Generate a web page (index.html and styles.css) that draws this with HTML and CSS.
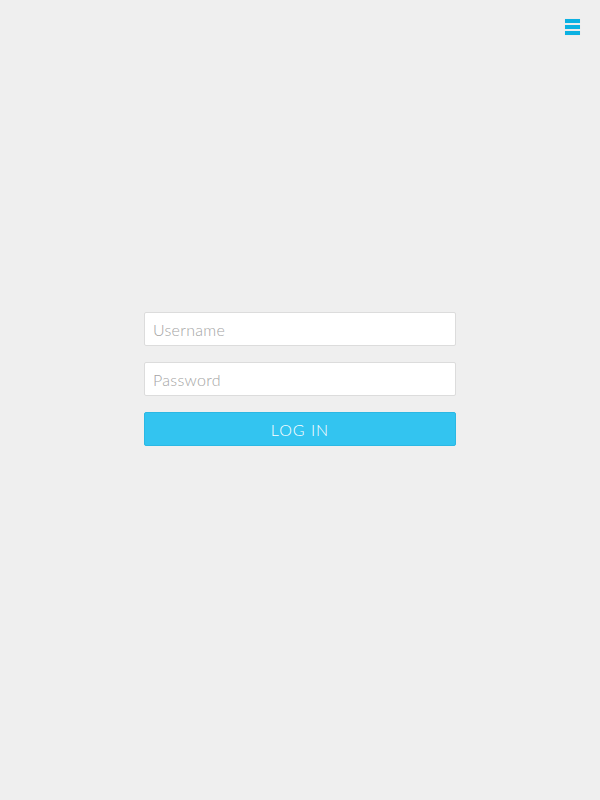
FILE: index.html
```html
<!DOCTYPE html>
<html lang="en">
  <head>
    <meta charset="UTF-8" />
    <meta name="viewport" content="width=device-width, initial-scale=1.0" />
    <title>Log in</title>
    <link rel="stylesheet" href="styles.css">
  </head>
  <body>
    <div class="topbar">
      <button class="menu" aria-label="Menu">
        <span></span>
        <span></span>
        <span></span>
      </button>
    </div>
    <form class="login">
      <input type="text" placeholder="Username" />
      <input type="password" placeholder="Password" />
      <button type="submit" class="submit">LOG IN</button>
    </form>
  </body>
</html>
```

FILE: styles.css
```css
body {
  margin: 0;
  height: 100vh;
  background-color: #efefef;
  font-family: Lato, "Open Sans", sans-serif;
}

.topbar {
  display: flex;
  justify-content: flex-end;
  padding: 19px 20px 0 0;
}

.menu {
  display: flex;
  flex-direction: column;
  gap: 2px;
  padding: 0;
  border: none;
  background: none;
  cursor: pointer;
}

.menu span {
  display: block;
  width: 15px;
  height: 4px;
  background-color: #0bb1e2;
  box-shadow: 0 0 1px rgba(0, 0, 0, 0.15);
}

.login {
  display: flex;
  flex-direction: column;
  gap: 16px;
  width: 312px;
  margin: 277px auto 0;
}

.login input {
  box-sizing: border-box;
  height: 34px;
  padding: 0 8px;
  border: 1px solid #dcdcdc;
  border-radius: 2px;
  background-color: #fff;
  font-family: inherit;
  font-size: 16px;
  font-weight: 300;
  letter-spacing: 0.3px;
  color: #444;
}

.login input::placeholder {
  color: #a4a4a4;
}

.submit {
  height: 34px;
  border: 1px solid #2bb8e4;
  border-radius: 2px;
  background-color: #33c4f0;
  color: #fff;
  font-family: inherit;
  font-size: 16px;
  font-weight: 300;
  letter-spacing: 1px;
  cursor: pointer;
}
```
